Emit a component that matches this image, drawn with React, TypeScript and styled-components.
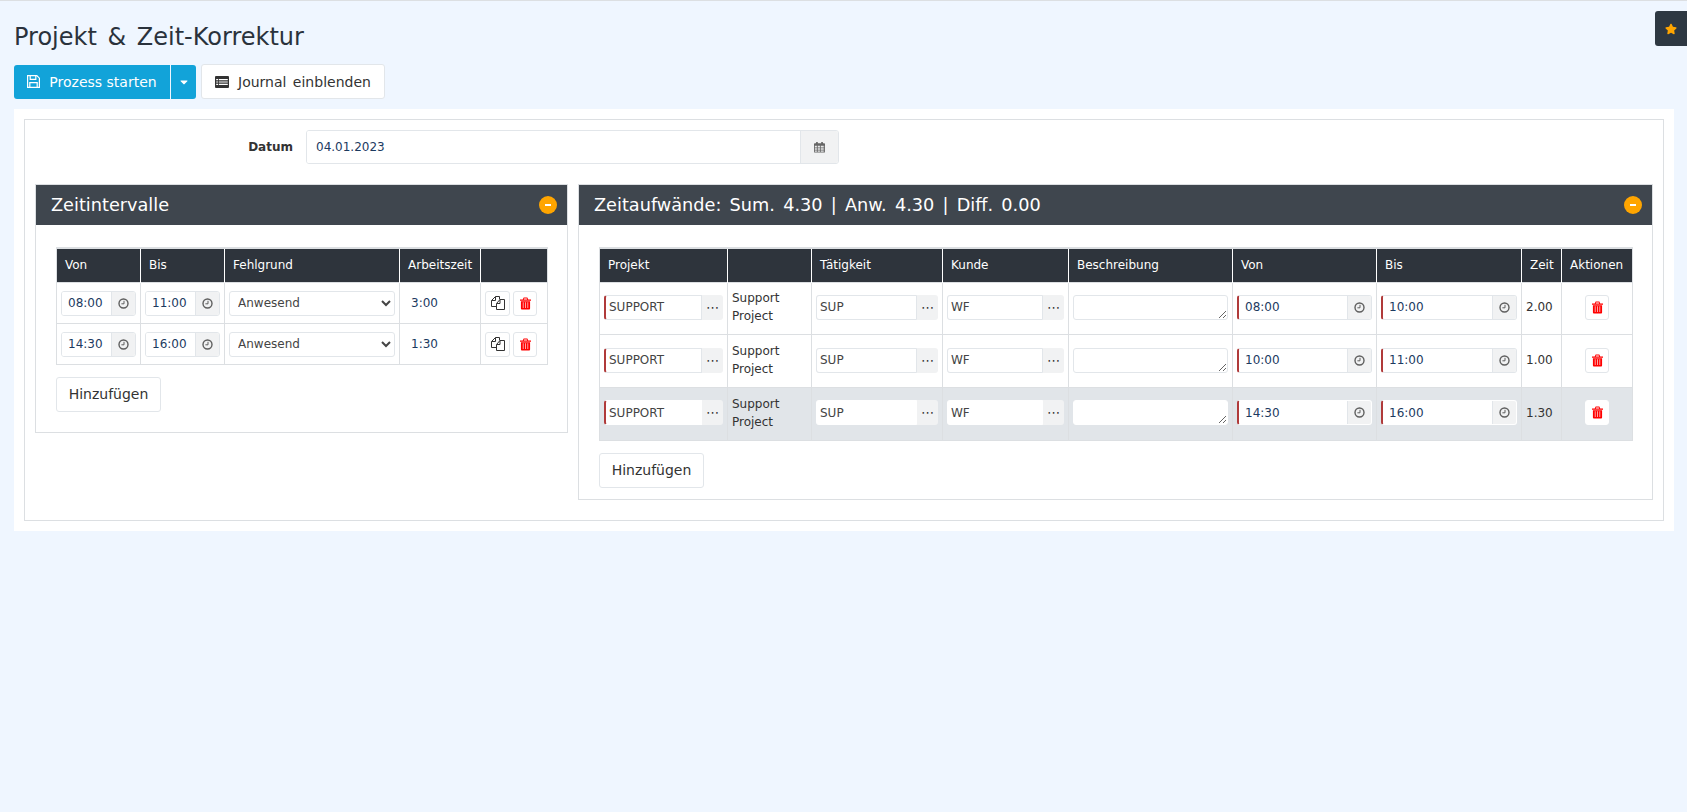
import styled, { createGlobalStyle } from "styled-components";
import { FaCaretDown, FaStar } from "react-icons/fa";

const GlobalStyle = createGlobalStyle`
  html, body { margin: 0; padding: 0; }
  body {
    background: #eff6ff;
    min-height: 812px;
    font-family: "DejaVu Sans", Verdana, sans-serif;
    font-size: 12px;
    color: #333;
    border-top: 1px solid #dcdfe2;
    box-sizing: border-box;
  }
  * { box-sizing: border-box; }
`;

const Page = styled.div`
  position: relative;
  padding: 22px 13px 0 14px;
`;

const Title = styled.h1`
  margin: 0 0 12px;
  font-size: 24px;
  line-height: 29px;
  font-weight: 400;
  word-spacing: 3px;
  color: #2a323c;
`;

const Toolbar = styled.div`
  display: flex;
  align-items: center;
  gap: 5px;
  margin-bottom: 10px;
`;

const SplitButton = styled.div`
  display: flex;
  height: 34px;
  border-radius: 3px;
  overflow: hidden;
  gap: 1px;
`;

const PrimaryButton = styled.button<{ $narrow?: boolean }>`
  display: flex;
  align-items: center;
  justify-content: center;
  gap: 9px;
  width: ${(p) => (p.$narrow ? "25px" : "156px")};
  padding: 0;
  border: 0;
  background: #12a3d9;
  color: #fff;
  font: 500 14px "DejaVu Sans", sans-serif;
`;

const PlainButton = styled.button`
  display: flex;
  align-items: center;
  gap: 9px;
  height: 35px;
  padding: 0 13px;
  background: #fff;
  border: 1px solid #e2e6ea;
  border-radius: 3px;
  color: #333;
  font: 400 14px "DejaVu Sans", sans-serif;
  word-spacing: 2px;
`;

const AddButton = styled(PlainButton)`
  width: 105px;
  justify-content: center;
  padding: 0;
`;

const FavTab = styled.div`
  position: absolute;
  top: 10px;
  right: 0;
  width: 32px;
  height: 35px;
  display: flex;
  align-items: center;
  justify-content: center;
  background: #2e3842;
  border-radius: 3px 0 0 3px;
  color: #ffa500;
  font-size: 12px;
`;

const Sheet = styled.div`
  background: #fff;
  padding: 10px;
  height: 422px;
`;

const Frame = styled.div`
  border: 1px solid #dcdfe2;
  height: 402px;
  padding: 10px 10px 0 10px;
`;

const DateRow = styled.div`
  display: flex;
  align-items: center;
  margin-bottom: 20px;
`;

const DateLabel = styled.label`
  width: 258px;
  text-align: right;
  font-weight: 700;
  font-size: 12px;
  color: #333;
  margin-right: 13px;
`;

const DateField = styled.div`
  display: flex;
  width: 533px;
  height: 34px;
  border: 1px solid #e2e6ea;
  border-radius: 3px;
  overflow: hidden;
`;

const DateInput = styled.input`
  flex: 1;
  min-width: 0;
  border: 0;
  outline: 0;
  padding: 0 9px;
  font: 12px "DejaVu Sans", sans-serif;
  color: #1c3a5f;
`;

const DateAddon = styled.span`
  width: 38px;
  display: flex;
  align-items: center;
  justify-content: center;
  background: #f1f2f3;
  border-left: 1px solid #e2e6ea;
`;

const Columns = styled.div`
  display: grid;
  grid-template-columns: 533px 1075px;
  gap: 10px;
  align-items: start;
`;

const Panel = styled.section<{ $height: number }>`
  border: 1px solid #dcdfe2;
  height: ${(p) => p.$height}px;
`;

const PanelHead = styled.header`
  display: flex;
  align-items: center;
  justify-content: space-between;
  height: 40px;
  padding: 0 10px 0 15px;
  background: #3f464e;
  color: #fff;
  font-size: 17.7px;
  word-spacing: 2.6px;
`;

const Collapse = styled.span`
  position: relative;
  width: 18px;
  height: 18px;
  border-radius: 50%;
  background: #ffa500;

  &::after {
    content: "";
    position: absolute;
    left: 6px;
    top: 8px;
    width: 6px;
    height: 2px;
    background: #fff;
  }
`;

const PanelBody = styled.div<{ $endGap: number }>`
  padding: 22px ${(p) => p.$endGap}px 0 20px;
`;

const Table = styled.table`
  width: 100%;
  table-layout: fixed;
  border-collapse: collapse;
  margin-bottom: 12px;
  border-top: 2px solid #dcdfe2;
`;

const HeadCell = styled.th`
  height: 34px;
  padding: 0 8px;
  background: #2e343c;
  color: #fff;
  font-size: 12px;
  font-weight: 400;
  text-align: left;
  white-space: nowrap;
  border-left: 1px solid #fff;
  &:first-child { border-left-color: #dcdfe2; }
  &:last-child { border-right: 1px solid #dcdfe2; }
`;

const Row = styled.tr<{ $active?: boolean }>`
  background: ${(p) => (p.$active ? "#e1e5e9" : "#fff")};
`;

const Cell = styled.td<{ $tall?: boolean }>`
  height: ${(p) => (p.$tall ? "52.7px" : "41px")};
  padding: ${(p) => (p.$tall ? "0 4px 2px" : "1px 4px 0")};
  border: 1px solid #dcdfe2;
  font-size: 12px;
  line-height: 18px;
  color: #333;
`;

const WorkTime = styled.span`
  padding-left: 7px;
  font-size: 12px;
  color: #1c3a5f;
`;

const InputGroup = styled.div<{ $required?: boolean; $active?: boolean }>`
  display: flex;
  width: 100%;
  height: 25px;
  border: 1px solid ${(p) => (p.$active ? "transparent" : "#e2e6ea")};
  border-left: ${(p) => (p.$required ? "2px solid #b03a3a" : undefined)};
  border-radius: 3px;
  overflow: hidden;
  background: #fff;
`;

const TimeInput = styled.input`
  flex: 1;
  width: 0;
  min-width: 0;
  border: 0;
  outline: 0;
  padding: 0 0 0 6px;
  font: 12px "DejaVu Sans", sans-serif;
  color: #1c3a5f;
  background: #fff;
`;

const TimeAddon = styled.span`
  flex: none;
  width: 24px;
  display: flex;
  align-items: center;
  justify-content: center;
  background: #f1f2f3;
  border-left: 1px solid #e2e6ea;
`;

const LookupGroup = styled.div`
  display: flex;
  width: 100%;
  height: 25px;
  border-radius: 3px;
  background: #f1f2f3;
`;

const LookupInput = styled.input<{ $required?: boolean; $active?: boolean }>`
  flex: 1;
  width: 0;
  min-width: 0;
  outline: 0;
  border: 1px solid ${(p) => (p.$active ? "#fff" : "#e2e6ea")};
  border-left: ${(p) => (p.$required ? "2px solid #b03a3a" : undefined)};
  border-radius: 3px 0 0 3px;
  padding: 0 0 0 3px;
  font: 12px "DejaVu Sans", sans-serif;
  color: #444;
`;

const LookupDots = styled.span`
  flex: none;
  width: 21px;
  text-align: center;
  font-size: 13px;
  line-height: 25px;
  color: #333;
`;

const Select = styled.select`
  width: 100%;
  height: 25px;
  padding: 0 4px;
  background: #fff;
  border: 1px solid #e2e6ea;
  border-radius: 3px;
  font: 12px "DejaVu Sans", sans-serif;
  color: #444;
`;

const Note = styled.textarea<{ $active?: boolean }>`
  display: block;
  width: 100%;
  height: 25px;
  margin: 0;
  padding: 0 4px;
  border: 1px solid ${(p) => (p.$active ? "#fff" : "#e2e6ea")};
  border-radius: 3px;
  outline: 0;
  background: #fff;
  resize: both;
`;

const Actions = styled.div<{ $center?: boolean }>`
  display: flex;
  gap: 3px;
  justify-content: ${(p) => (p.$center ? "center" : "flex-start")};
`;

const IconButton = styled.button<{ $danger?: boolean; $active?: boolean }>`
  width: ${(p) => (p.$danger ? "24px" : "25px")};
  height: 25px;
  padding: 0;
  display: flex;
  align-items: center;
  justify-content: center;
  border: 1px solid ${(p) => (p.$active ? "#fff" : "#e2e6ea")};
  border-radius: 3px;
  background: #fff;
`;

function SaveIcon() {
  return (
    <svg width="13" height="13" viewBox="0 0 13 13" fill="none" stroke="#fff" strokeWidth="1.2">
      <path d="M.6.6h9.2l2.6 2.6v9.2H.6z" />
      <path d="M3.2.8v3.6h5.6V.8M2.8 12.2V7.6h7.4v4.6" />
    </svg>
  );
}

function ListIcon() {
  return (
    <svg width="14" height="12" viewBox="0 0 14 12">
      <path fill="#333" d="M1 0h12a1 1 0 0 1 1 1v10a1 1 0 0 1-1 1H1a1 1 0 0 1-1-1V1a1 1 0 0 1 1-1z" />
      <path fill="#fff" d="M1.2 3h2v1.2h-2zM4 3h8.8v1.2H4zM1.2 5.4h2v1.2h-2zM4 5.4h8.8v1.2H4zM1.2 7.8h2V9h-2zM4 7.8h8.8V9H4z" />
    </svg>
  );
}

function CalendarIcon() {
  return (
    <svg width="11" height="12" viewBox="0 0 13 13">
      <path fill="#666" d="M1 2h1.5V.5h2V2h4V.5h2V2H12a1 1 0 0 1 1 1v9a1 1 0 0 1-1 1H1a1 1 0 0 1-1-1V3a1 1 0 0 1 1-1z" />
      <path fill="#e8e9ea" d="M1 5h2.4v2H1zM4.4 5h2.6v2H4.4zM8 5h2.6v2H8zM11 5h1v2h-1zM1 8h2.4v1.8H1zM4.4 8h2.6v1.8H4.4zM8 8h2.6v1.8H8zM11 8h1v1.8h-1zM1 10.6h2.4V12H1zM4.4 10.6h2.6V12H4.4zM8 10.6h2.6V12H8zM11 10.6h1V12h-1z" />
    </svg>
  );
}

function ClockIcon() {
  return (
    <svg width="11" height="11" viewBox="0 0 11 11" fill="none" stroke="#5e5e5e">
      <circle cx="5.5" cy="5.5" r="4.5" strokeWidth="1.4" />
      <path d="M6 2.8v3H3.4" strokeWidth="1" />
    </svg>
  );
}

function CopyIcon() {
  return (
    <svg width="14" height="14" viewBox="0 0 14 14" fill="none" stroke="#333" strokeWidth="1">
      <path d="M8.5 3.5V.5H4.5l-4 4v6h5" />
      <path d="M4.5.7v3.8H.7" />
      <path d="M9 3.5h4.5v10h-8v-6z" fill="#fff" />
      <path d="M9 3.7v3.8H5.7" />
    </svg>
  );
}

function TrashIcon() {
  return (
    <svg width="11" height="13" viewBox="0 0 12 13">
      <path fill="#f00" d="M4 0h4l1 2h3v1.4H0V2h3zM1 4h10v8a1 1 0 0 1-1 1H2a1 1 0 0 1-1-1z" />
      <path fill="#ffb0b0" d="M3 5.2h1v6.3H3zM5.5 5.2h1v6.3h-1zM8 5.2h1v6.3H8z" />
      <path fill="#fff" d="M4.6 1h2.8l.4 1H4.2z" />
    </svg>
  );
}

function TimeField({ value, required, active }: { value: string; required?: boolean; active?: boolean }) {
  return (
    <InputGroup $required={required} $active={active}>
      <TimeInput defaultValue={value} />
      <TimeAddon>
        <ClockIcon />
      </TimeAddon>
    </InputGroup>
  );
}

function Lookup({ value, required, active }: { value: string; required?: boolean; active?: boolean }) {
  return (
    <LookupGroup>
      <LookupInput defaultValue={value} $required={required} $active={active} />
      <LookupDots>⋯</LookupDots>
    </LookupGroup>
  );
}

const intervals = [
  { from: "08:00", to: "11:00", total: "3:00" },
  { from: "14:30", to: "16:00", total: "1:30" },
];

const efforts = [
  { from: "08:00", to: "10:00", total: "2.00" },
  { from: "10:00", to: "11:00", total: "1.00" },
  { from: "14:30", to: "16:00", total: "1.30", active: true },
];

export default function App() {
  return (
    <>
      <GlobalStyle />
      <Page>
        <Title>Projekt &amp; Zeit-Korrektur</Title>
        <FavTab>
          <FaStar />
        </FavTab>
        <Toolbar>
          <SplitButton>
            <PrimaryButton>
              <SaveIcon />
              Prozess starten
            </PrimaryButton>
            <PrimaryButton $narrow>
              <FaCaretDown size={12} />
            </PrimaryButton>
          </SplitButton>
          <PlainButton>
            <ListIcon />
            Journal einblenden
          </PlainButton>
        </Toolbar>
        <Sheet>
          <Frame>
            <DateRow>
              <DateLabel>Datum</DateLabel>
              <DateField>
                <DateInput defaultValue="04.01.2023" />
                <DateAddon>
                  <CalendarIcon />
                </DateAddon>
              </DateField>
            </DateRow>
            <Columns>
              <Panel $height={249}>
                <PanelHead>
                  Zeitintervalle
                  <Collapse />
                </PanelHead>
                <PanelBody $endGap={22}>
                  <Table>
                    <colgroup>
                      <col width="84" />
                      <col width="84" />
                      <col width="175" />
                      <col width="81" />
                      <col width="67" />
                    </colgroup>
                    <thead>
                      <tr>
                        <HeadCell>Von</HeadCell>
                        <HeadCell>Bis</HeadCell>
                        <HeadCell>Fehlgrund</HeadCell>
                        <HeadCell>Arbeitszeit</HeadCell>
                        <HeadCell />
                      </tr>
                    </thead>
                    <tbody>
                      {intervals.map((row) => (
                        <Row key={row.from}>
                          <Cell>
                            <TimeField value={row.from} />
                          </Cell>
                          <Cell>
                            <TimeField value={row.to} />
                          </Cell>
                          <Cell>
                            <Select defaultValue="Anwesend">
                              <option>Anwesend</option>
                            </Select>
                          </Cell>
                          <Cell>
                            <WorkTime>{row.total}</WorkTime>
                          </Cell>
                          <Cell>
                            <Actions>
                              <IconButton>
                                <CopyIcon />
                              </IconButton>
                              <IconButton $danger>
                                <TrashIcon />
                              </IconButton>
                            </Actions>
                          </Cell>
                        </Row>
                      ))}
                    </tbody>
                  </Table>
                  <AddButton>Hinzufügen</AddButton>
                </PanelBody>
              </Panel>
              <Panel $height={316}>
                <PanelHead>
                  Zeitaufwände: Sum. 4.30 | Anw. 4.30 | Diff. 0.00
                  <Collapse />
                </PanelHead>
                <PanelBody $endGap={20}>
                  <Table>
                    <colgroup>
                      <col width="128" />
                      <col width="84" />
                      <col width="131" />
                      <col width="126" />
                      <col width="164" />
                      <col width="144" />
                      <col width="145" />
                      <col width="40" />
                      <col width="71" />
                    </colgroup>
                    <thead>
                      <tr>
                        <HeadCell>Projekt</HeadCell>
                        <HeadCell />
                        <HeadCell>Tätigkeit</HeadCell>
                        <HeadCell>Kunde</HeadCell>
                        <HeadCell>Beschreibung</HeadCell>
                        <HeadCell>Von</HeadCell>
                        <HeadCell>Bis</HeadCell>
                        <HeadCell>Zeit</HeadCell>
                        <HeadCell>Aktionen</HeadCell>
                      </tr>
                    </thead>
                    <tbody>
                      {efforts.map((row) => (
                        <Row key={row.from} $active={row.active}>
                          <Cell $tall>
                            <Lookup value="SUPPORT" required active={row.active} />
                          </Cell>
                          <Cell $tall>Support Project</Cell>
                          <Cell $tall>
                            <Lookup value="SUP" active={row.active} />
                          </Cell>
                          <Cell $tall>
                            <Lookup value="WF" active={row.active} />
                          </Cell>
                          <Cell $tall>
                            <Note $active={row.active} />
                          </Cell>
                          <Cell $tall>
                            <TimeField value={row.from} required active={row.active} />
                          </Cell>
                          <Cell $tall>
                            <TimeField value={row.to} required active={row.active} />
                          </Cell>
                          <Cell $tall>{row.total}</Cell>
                          <Cell $tall>
                            <Actions $center>
                              <IconButton $danger $active={row.active}>
                                <TrashIcon />
                              </IconButton>
                            </Actions>
                          </Cell>
                        </Row>
                      ))}
                    </tbody>
                  </Table>
                  <AddButton>Hinzufügen</AddButton>
                </PanelBody>
              </Panel>
            </Columns>
          </Frame>
        </Sheet>
      </Page>
    </>
  );
}
